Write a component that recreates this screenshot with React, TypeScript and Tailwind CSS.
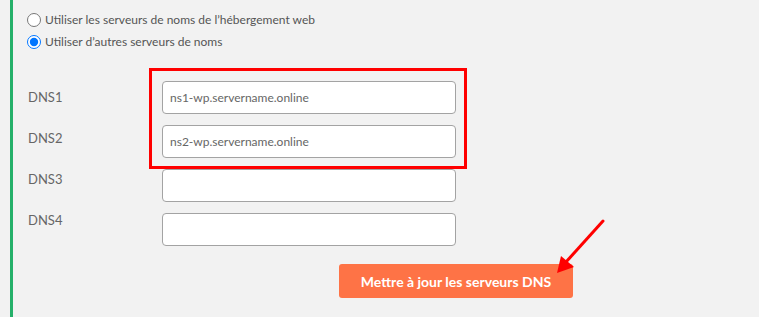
import React from 'react';

const DnsPage = () => {
  const servers = ['ns1-wp.servername.online', 'ns2-wp.servername.online', '', ''];

  return (
    <div className="relative w-[759px] h-[317px] overflow-hidden bg-[#f2f2f2] font-['Lato',sans-serif]">
      <div className="ml-[10px] h-full border-l-[3px] border-[#25b06a] pl-[14px] pt-[9px]">
        {/* --- Radio choices --- */}
        <div className="flex flex-col text-[12px] text-[#555]">
          <label className="flex h-[22px] items-center gap-[4px]">
            <input type="radio" name="ns" className="h-[14px] w-[14px]" />
            <span>Utiliser les serveurs de noms de l’hébergement web</span>
          </label>
          <label className="flex h-[22px] items-center gap-[4px]">
            <input type="radio" name="ns" defaultChecked className="h-[14px] w-[14px]" />
            <span>Utiliser d’autres serveurs de noms</span>
          </label>
        </div>

        {/* --- DNS fields --- */}
        <div className="mt-[28px] flex">
          <div className="ml-[1px] flex w-[134px] flex-col gap-[7px] text-[13px] text-[#666]">
            {servers.map((_, i) => (
              <div key={i} className="flex h-[34px] items-center">DNS{i + 1}</div>
            ))}
          </div>
          <div className="flex flex-col">
            <div className="flex w-[294px] flex-col gap-[11px]">
              {servers.map((value, i) => (
                <input
                  key={i}
                  type="text"
                  defaultValue={value}
                  className="h-[33px] w-full rounded-[4px] border border-[#a3a3a3] bg-white px-[7px] text-[12px] text-[#666] outline-none"
                />
              ))}
            </div>
            <button className="ml-[177px] mt-[18px] h-[34px] w-[234px] whitespace-nowrap rounded-[3px] bg-[#fe7346] text-[14px] font-bold text-white">
              Mettre à jour les serveurs DNS
            </button>
          </div>
        </div>
      </div>

      {/* --- Annotations --- */}
      <div className="pointer-events-none absolute left-[149px] top-[68px] h-[101px] w-[318px] border-[3px] border-[#ff0000]" />
      <svg className="pointer-events-none absolute left-0 top-0" width="759" height="317">
        <line x1="603" y1="221" x2="566" y2="262" stroke="#ff0000" strokeWidth="3" strokeLinecap="round" />
        <polygon points="557,273 561,256 574,267" fill="#ff0000" />
      </svg>
    </div>
  );
};

export default function App() {
  return <DnsPage />;
}
